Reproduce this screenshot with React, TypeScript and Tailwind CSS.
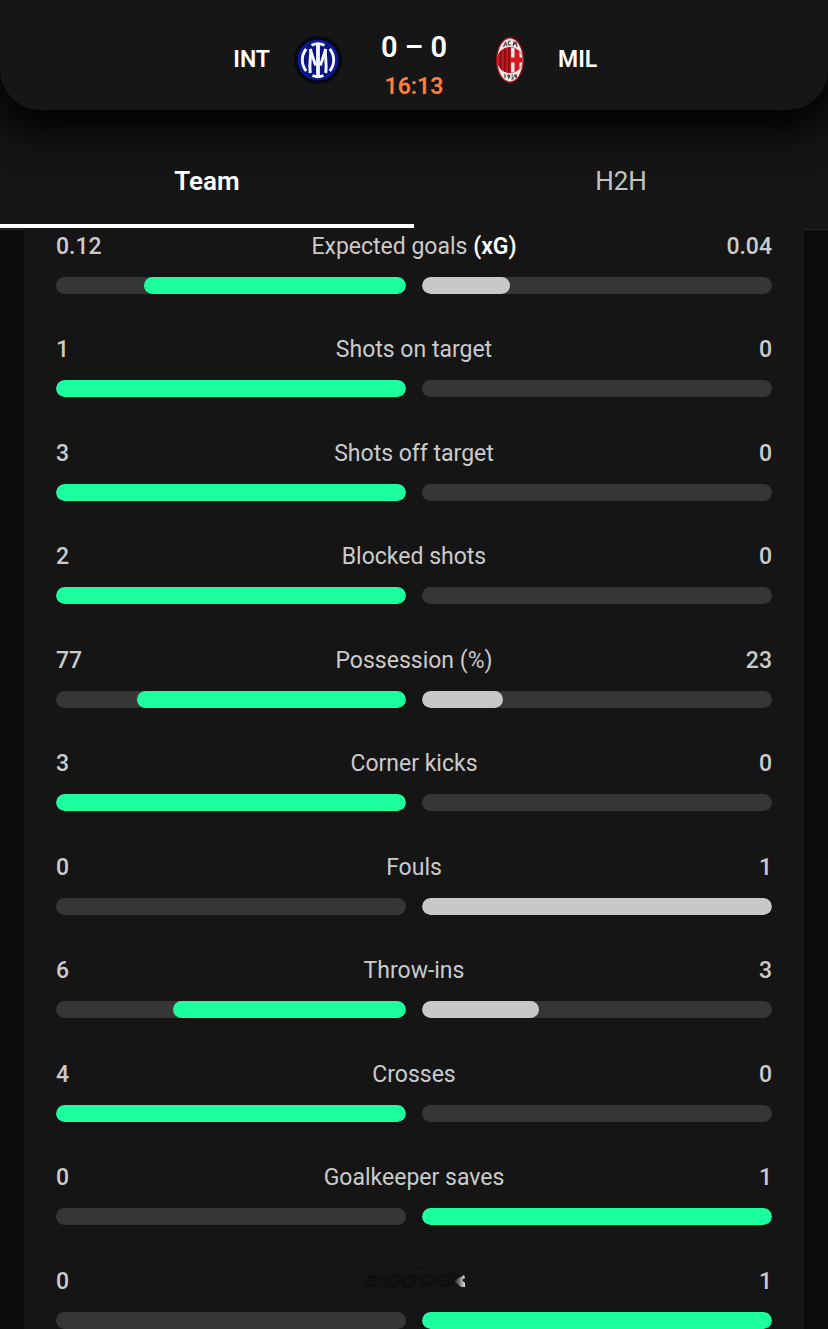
import { useState } from "react";

type Stat = {
  label: string;
  suffix?: string;
  home: string;
  away: string;
  homeShare: number;
  awayShare: number;
  awayLeads?: boolean;
  faded?: boolean;
};

const stats: Stat[] = [
  { label: "Expected goals", suffix: "(xG)", home: "0.12", away: "0.04", homeShare: 75, awayShare: 25 },
  { label: "Shots on target", home: "1", away: "0", homeShare: 100, awayShare: 0 },
  { label: "Shots off target", home: "3", away: "0", homeShare: 100, awayShare: 0 },
  { label: "Blocked shots", home: "2", away: "0", homeShare: 100, awayShare: 0 },
  { label: "Possession (%)", home: "77", away: "23", homeShare: 77, awayShare: 23 },
  { label: "Corner kicks", home: "3", away: "0", homeShare: 100, awayShare: 0 },
  { label: "Fouls", home: "0", away: "1", homeShare: 0, awayShare: 100 },
  { label: "Throw-ins", home: "6", away: "3", homeShare: 66.7, awayShare: 33.3 },
  { label: "Crosses", home: "4", away: "0", homeShare: 100, awayShare: 0 },
  { label: "Goalkeeper saves", home: "0", away: "1", homeShare: 0, awayShare: 100, awayLeads: true },
  { label: "", home: "0", away: "1", homeShare: 0, awayShare: 100, awayLeads: true, faded: true },
];

function InterCrest() {
  return (
    <svg viewBox="0 0 48 48" className="size-12" aria-hidden="true">
      <circle cx="24" cy="24" r="24" fill="#060812" />
      <circle cx="24" cy="24" r="20.4" fill="#0b1a9a" />
      <circle cx="24" cy="24" r="18" fill="#0c1480" />
      <g fill="none" stroke="#f4f8ff">
        <path d="M17.5 9.2C21.5 7.4 26.5 7.4 30.5 9.2M18.5 39.6C22 41.2 26 41.2 29.5 39.6" strokeWidth="2.8" />
        <path d="M24 8.5V40" strokeWidth="3.8" />
        <path d="M16.6 13C17.4 20 14.8 26 16.2 37M31.4 13C30.6 20 33.2 26 31.8 37" strokeWidth="3" />
        <path d="M16.2 13L21.6 29.5M31.8 13L26.4 29.5" strokeWidth="2.8" />
        <path d="M12.2 13C7 19.5 7 28.5 12.2 35M35.8 13C41 19.5 41 28.5 35.8 35" strokeWidth="2.9" />
      </g>
    </svg>
  );
}

function MilanCrest() {
  return (
    <svg viewBox="0 0 48 48" className="size-12" aria-hidden="true">
      <defs>
        <clipPath id="milan-oval">
          <ellipse cx="24" cy="24" rx="12.6" ry="12.6" />
        </clipPath>
      </defs>
      <ellipse cx="24" cy="24" rx="14" ry="23" fill="#a3121b" />
      <ellipse cx="24" cy="24" rx="12.6" ry="21.4" fill="#f1ecea" />
      <circle cx="24" cy="24" r="13" fill="#c8151d" />
      <g clipPath="url(#milan-oval)">
        <rect x="11" y="11" width="26" height="26" fill="#c8151d" />
        <path d="M14.6 11V37M18.8 11V37M23 11V37" stroke="#7a0d14" strokeWidth="1.4" />
        <rect x="25" y="11" width="13" height="26" fill="#f1ecea" />
        <path d="M24.5 24H38M31 11V37" stroke="#d5171f" strokeWidth="5" />
      </g>
      <g fill="none" stroke="#4a3d40" strokeWidth="1.2">
        <path d="M17.5 11L19.5 6.5L21 10M24.7 5C22.6 4.8 22 6.4 22.5 8.2C23 9.2 24.2 9.3 25.2 8.8M27 10L28 6L29 8L30 6.5L31 11" />
        <path d="M19 38V42M22 42.5C24 41.5 24 38.5 22.4 39C21 39.6 22 41 23.4 40.6M25.5 39H27M25.5 41H27V43H25.3M29.8 42C31 40.5 30.3 38.2 29 38.9C28.2 39.7 29 41 30.2 40.4" />
      </g>
    </svg>
  );
}

function FadedLabel() {
  return (
    <svg viewBox="0 0 104 32" className="h-8 w-[104px]" aria-hidden="true">
      <defs>
        <filter id="fade-soft" x="-20%" y="-50%" width="140%" height="200%">
          <feGaussianBlur stdDeviation="2.5" />
        </filter>
        <linearGradient id="fade-tail">
          <stop offset="0" stopColor="#161616" />
          <stop offset="1" stopColor="#dddddd" />
        </linearGradient>
      </defs>
      <path d="M5 15H17M25 18L35 12M43 18L51 11M60 17L69 12M77 16L91 12" stroke="#0c0c0c" strokeWidth="7" filter="url(#fade-soft)" />
      <path d="M2 25H94M39 2H69" stroke="#101010" strokeWidth="2" strokeDasharray="3 2" />
      <path d="M92 15L102 9L103 12L100 14L103 17L103 21L99 21Z" fill="url(#fade-tail)" />
    </svg>
  );
}

function StatRow({ stat }: { stat: Stat }) {
  return (
    <li className="pb-10 last:pb-0 even:pb-[41px]">
      <div className="grid grid-cols-[1fr_auto_1fr] items-center text-[23px] leading-8 text-[#cbcbcb]">
        <span className="font-medium">{stat.home}</span>
        {stat.faded ? (
          <FadedLabel />
        ) : (
          <span>
            {stat.label}
            {stat.suffix && <span className="font-semibold text-white"> {stat.suffix}</span>}
          </span>
        )}
        <span className="text-right font-medium">{stat.away}</span>
      </div>
      <div className="mt-3.5 grid grid-cols-2 gap-4">
        <div className="flex h-[17px] justify-end overflow-hidden rounded-full bg-[#363636]">
          <div className="rounded-full bg-[#1bff9f]" style={{ width: `${stat.homeShare}%` }} />
        </div>
        <div className="flex h-[17px] overflow-hidden rounded-full bg-[#363636]">
          <div
            className={stat.awayLeads ? "rounded-full bg-[#1bff9f]" : "rounded-full bg-[#c8c8c8]"}
            style={{ width: `${stat.awayShare}%` }}
          />
        </div>
      </div>
    </li>
  );
}

export default function App() {
  const [tab, setTab] = useState("Team");
  return (
    <div className="min-h-screen bg-[#0c0c0c] font-[Roboto,'Liberation_Sans',sans-serif]">
      <div className="bg-[#151515]">
        <header className="relative grid h-[110px] grid-cols-[1fr_48px_144px_48px_1fr] items-center rounded-b-[40px] bg-[#161616] pt-2.5 text-white shadow-[0_12px_40px_8px_#000000]">
          <span className="pr-6 text-right text-[23px] font-semibold">INT</span>
          <InterCrest />
          <div className="pt-3.5 text-center">
            <div className="text-[29px] leading-10 font-semibold">0 – 0</div>
            <div className="text-[23px] leading-10 font-semibold text-[#ff7f3b]">16:13</div>
          </div>
          <MilanCrest />
          <span className="pl-6 text-[23px] font-semibold">MIL</span>
        </header>
        <nav className="grid h-[120px] grid-cols-2 border-b border-[#262626] pt-6" role="tablist">
          {["Team", "H2H"].map((name) => (
            <button
              key={name}
              type="button"
              role="tab"
              aria-selected={tab === name}
              onClick={() => setTab(name)}
              className={
                tab === name
                  ? "relative mb-px border-b-4 border-white pt-1 text-[26px] font-semibold text-white"
                  : "relative mb-px border-b-4 border-transparent pt-1 text-[26px] text-[#c4c4c4]"
              }
            >
              {name}
            </button>
          ))}
        </nav>
      </div>
      <main className="relative mx-6 -mt-px bg-[#151515] px-8 pt-0.5">
        <ul>
          {stats.map((stat, i) => (
            <StatRow key={i} stat={stat} />
          ))}
        </ul>
      </main>
    </div>
  );
}
